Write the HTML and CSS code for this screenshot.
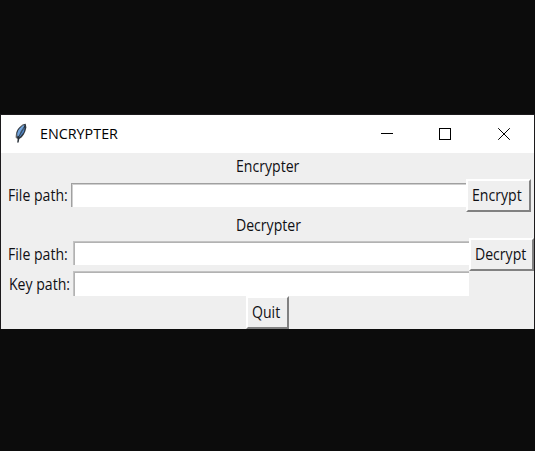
FILE: index.html
```html
<!DOCTYPE html>
<html lang="en">
<head>
<meta charset="utf-8">
<title>ENCRYPTER</title>
<link rel="stylesheet" href="styles.css">
</head>
<body>
<main class="window">
  <header class="titlebar">
    <svg class="feather" width="14" height="21" viewBox="0 0 14 21">
      <path d="M11.7 .8C8 1.2 4 4.5 2.3 9.6L1.8 14.2 3.7 16.2 3.4 19.6 4.5 19.5 5.3 16C9 14 11.4 10 12.4 4.5Z" fill="#303841"/>
      <path d="M10.5 1.8C7 3.2 4.1 6.5 3.2 10.5L3.3 13.6 5.5 12.5 7.3 8.8 9.6 5.5Z" fill="#72a4dc"/>
      <path d="M10.8 4.2L9.9 9 6.2 13.4 4.7 14.3Z" fill="#4f86c6"/>
      <path d="M11.3 2.3L7.5 7.7 4.7 14 3.8 19.5" fill="none" stroke="#202830" stroke-width=".6"/>
      <path d="M2 11.5v3l1.2 1.2M6.6 3.4l2.5-1.8" fill="none" stroke="#aaa69e" stroke-width=".8"/>
    </svg>
    <h1 class="caption"><span class="text">ENCRYPTER</span></h1>
    <svg class="controls" width="132" height="14" viewBox="0 0 132 14" fill="none" stroke="#000" shape-rendering="crispEdges">
      <path d="M0 6.5h12M58.5 1.5h11v11h-11z"/>
      <path d="M117.2 1.2l11.6 11.6M128.8 1.2l-11.6 11.6" shape-rendering="auto"/>
    </svg>
  </header>
  <section class="group">
    <h2 class="heading"><span class="text">Encrypter</span></h2>
    <div class="row encrypt-row">
      <label class="label" for="source"><span class="text">File path:</span></label>
      <input class="field" id="source">
      <button class="button"><span class="text">Encrypt</span></button>
    </div>
  </section>
  <section class="group">
    <h2 class="heading"><span class="text">Decrypter</span></h2>
    <div class="row decrypt-row">
      <label class="label" for="target"><span class="text">File path:</span></label>
      <input class="field" id="target">
      <button class="button"><span class="text">Decrypt</span></button>
    </div>
    <div class="row key-row">
      <label class="label key-label" for="key"><span class="text">Key path:</span></label>
      <input class="field" id="key">
    </div>
  </section>
  <footer class="footer"><button class="button quit"><span class="text">Quit</span></button></footer>
</main>
</body>
</html>
```
FILE: styles.css
```css
* { box-sizing: border-box; }
body {
  margin: 0;
  height: 451px;
  padding: 114px 0 0;
  background: #0c0c0c;
  overflow: hidden;
  font: 16px/20px "Open Sans", "Noto Sans", sans-serif;
  color: #101014;
}
.window {
  width: 535px;
  height: 215px;
  border: 1px solid #1c1a1c;
  border-bottom: 0;
  background: #efefef;
}
.titlebar {
  display: flex;
  height: 38px;
  background: #fff;
}
.feather { margin: 8px 0 0 13px; }
.caption {
  width: 90px;
  margin: 8px 0 0 12px;
  font: inherit;
  font-size: 15px;
  color: #000;
}
.controls { margin: 12px 0 0 251px; }
.text {
  display: inline-block;
  transform: scaleX(.88);
  transform-origin: left;
  white-space: nowrap;
}
.caption .text { transform: scaleX(.955); }
.heading {
  height: 26px;
  margin: 0;
  padding: 3px 0 0 235px;
  font: inherit;
}
.decrypt-row, .encrypt-row { align-items: flex-start; }
.row { display: flex; }
.label {
  width: 70px;
  padding: 6px 0 0 6.5px;
}
.field {
  width: 395px;
  height: 24px;
  margin-top: 4px;
  padding: 2px;
  border: 0 solid #a0a0a0;
  border-width: 1px 0 0 1px;
  border-radius: 0;
  background: #fff;
  box-shadow: inset 1px 1px #cfcfcf;
  outline: 0;
}
.encrypt-row { height: 33px; }
.decrypt-row { height: 32px; }
.decrypt-row .label, .key-row .label { width: 72px; }
.decrypt-row .field, .key-row .field {
  width: 396px;
  margin-top: 3px;
  border-color: #c3c3c3;
  box-shadow: inset 1px 1px #b2b2b2;
}
.key-row { height: 26px; }
.key-row .field { height: 25px; margin-top: 1px; }
.key-row .label { padding: 4px 0 0 7.5px; }
.button {
  width: 65px;
  height: 33px;
  padding: 0 0 1px 4px;
  border: 2px solid;
  border-color: #fff #818181 #818181 #fff;
  border-radius: 0;
  background: #efefef;
  font: inherit;
  color: inherit;
  text-align: left;
}
.footer { padding-left: 245px; }
.quit { width: 43px; }
```
